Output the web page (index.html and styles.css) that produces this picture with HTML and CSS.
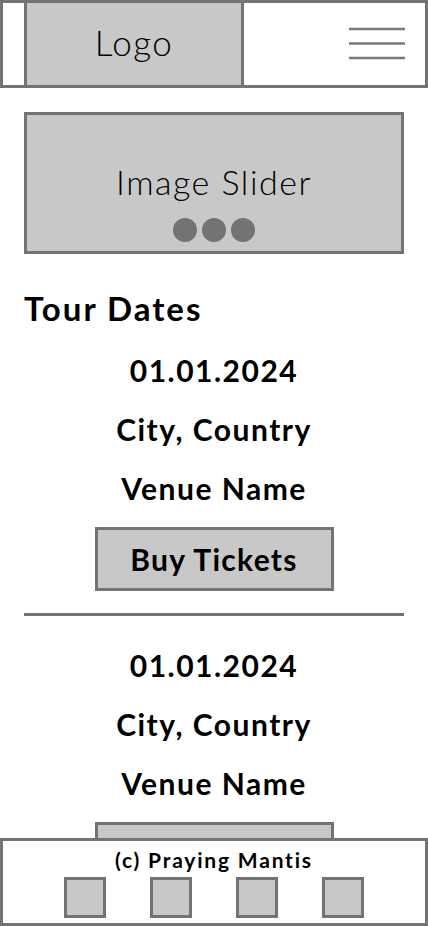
FILE: index.html
```html
<!DOCTYPE html>
<html lang="en">
<head>
<meta charset="utf-8">
<meta name="viewport" content="width=device-width, initial-scale=1">
<title>Praying Mantis</title>
<link rel="stylesheet" href="styles.css">
</head>
<body>
<header class="site-header">
  <div class="logo">Logo</div>
  <button class="menu-btn" aria-label="Menu">
    <svg width="56" height="34" viewBox="0 0 56 34" aria-hidden="true">
      <line x1="0" y1="2" x2="56" y2="2" />
      <line x1="0" y1="16.5" x2="56" y2="16.5" />
      <line x1="0" y1="31" x2="56" y2="31" />
    </svg>
  </button>
</header>

<main class="content">
  <section class="slider">
    <div class="slider-title">Image Slider</div>
    <div class="dots"><span class="dot"></span><span class="dot"></span><span class="dot"></span></div>
  </section>

  <h2 class="section-title">Tour Dates</h2>

  <article class="tour-entry">
    <div class="tour-line">01.01.2024</div>
    <div class="tour-line">City, Country</div>
    <div class="tour-line">Venue Name</div>
    <div class="btn-row"><button class="buy-btn">Buy Tickets</button></div>
  </article>
  <hr class="divider">
  <article class="tour-entry">
    <div class="tour-line">01.01.2024</div>
    <div class="tour-line">City, Country</div>
    <div class="tour-line">Venue Name</div>
    <div class="btn-row"><button class="buy-btn">Buy Tickets</button></div>
  </article>
  <hr class="divider">
</main>

<footer class="site-footer">
  <div class="copyright">(c) Praying Mantis</div>
  <div class="socials">
    <span class="social"></span><span class="social"></span><span class="social"></span><span class="social"></span>
  </div>
</footer>
</body>
</html>
```

FILE: styles.css
```css
* { box-sizing: border-box; }
html, body { margin: 0; padding: 0; }
body {
  font-family: Lato, "Noto Sans", "Liberation Sans", sans-serif;
  color: #000;
  background: #fff;
  padding-bottom: 100px;
}

.site-header {
  height: 88px;
  border: 3px solid #737373;
  display: flex;
  align-items: stretch;
  justify-content: space-between;
}
.logo {
  width: 220px;
  margin-left: 21px;
  background: #c8c8c8;
  border-left: 3px solid #737373;
  border-right: 3px solid #737373;
  display: flex;
  align-items: center;
  justify-content: center;
  font-size: 35px;
  font-weight: 300;
  letter-spacing: 1.5px;
  padding-bottom: 4px;
}
.menu-btn {
  background: none;
  border: 0;
  padding: 0;
  margin-right: 20px;
  display: flex;
  align-items: center;
}
.menu-btn svg { display: block; }
.menu-btn line { stroke: #7a7a7a; stroke-width: 2.6; }

.content { padding: 0 24px; }

.slider {
  margin-top: 24px;
  height: 142px;
  background: #c8c8c8;
  border: 3px solid #737373;
  padding-top: 47px;
  display: flex;
  flex-direction: column;
  align-items: center;
}
.slider-title {
  font-size: 34px;
  font-weight: 300;
  letter-spacing: 1.5px;
  line-height: 40px;
}
.dots { display: flex; gap: 5px; margin-top: 16px; }
.dot { width: 24px; height: 24px; border-radius: 50%; background: #737373; }

.section-title {
  margin: 34px 0 0;
  font-size: 33px;
  font-weight: 700;
  letter-spacing: 2px;
  line-height: 40px;
}

.tour-entry { margin-top: 13px; }
.tour-line {
  text-align: center;
  font-size: 30px;
  font-weight: 700;
  letter-spacing: 1.5px;
  line-height: 59px;
}
.btn-row { display: flex; justify-content: center; margin-top: 9px; }
.buy-btn {
  width: 239px;
  height: 64px;
  background: #c8c8c8;
  border: 3px solid #737373;
  font-family: inherit;
  font-size: 30px;
  font-weight: 700;
  letter-spacing: 1.3px;
  color: #000;
  padding: 0;
}
.divider {
  margin: 22px 0 0;
  border: 0;
  height: 3px;
  background: #737373;
}
.divider + .tour-entry { margin-top: 20px; }

.site-footer {
  position: fixed;
  left: 0;
  right: 0;
  bottom: 0;
  height: 88px;
  background: #fff;
  border: 3px solid #737373;
  padding-top: 7px;
}
.copyright {
  text-align: center;
  font-size: 21px;
  font-weight: 700;
  letter-spacing: 1.8px;
  line-height: 24px;
}
.socials {
  margin-top: 5px;
  display: flex;
  justify-content: center;
  gap: 44px;
}
.social {
  width: 42px;
  height: 41px;
  background: #c8c8c8;
  border: 3px solid #737373;
}
```
